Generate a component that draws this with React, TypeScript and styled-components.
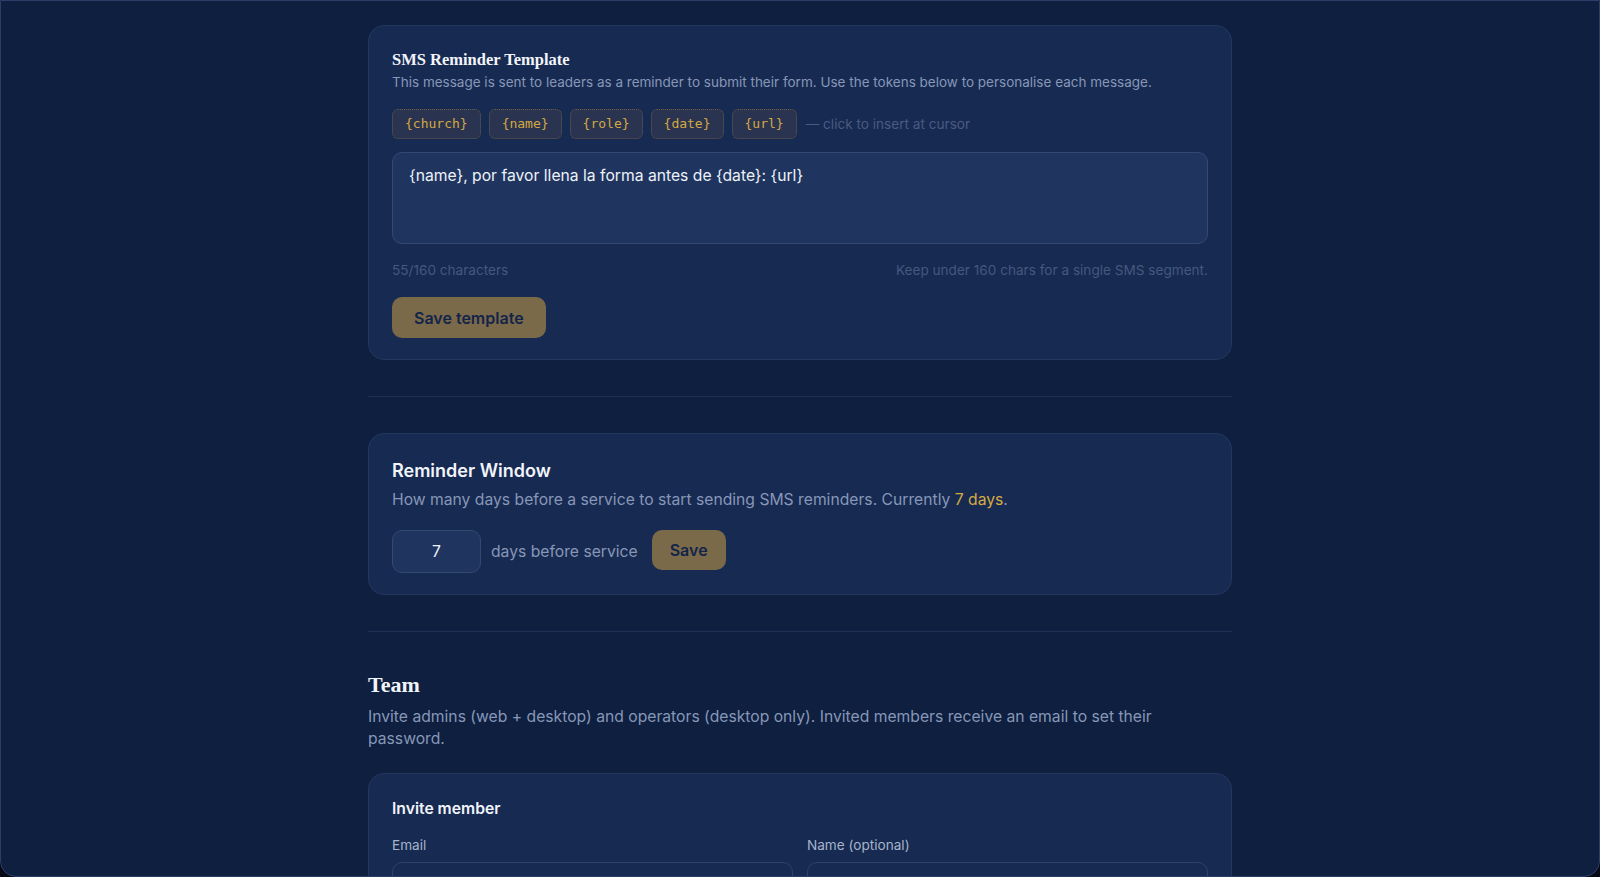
import React from "react";
import styled, { createGlobalStyle } from "styled-components";

const GlobalStyle = createGlobalStyle`
  * { box-sizing: border-box; }
  html, body { margin: 0; padding: 0; background: #070a12; }
  body { font-family: Inter, "Noto Sans", "Liberation Sans", sans-serif; -webkit-font-smoothing: antialiased; }
`;

const Window = styled.div`
  width: 100vw;
  height: 100vh;
  background: #0e1f3f;
  border: 1px solid #2c3e68;
  border-radius: 0 0 16px 16px;
  overflow: hidden;
`;

const Content = styled.main`
  width: 864px;
  margin: 0 auto;
  padding-top: 24px;
  display: flex;
  flex-direction: column;
`;

const Card = styled.section`
  background: #172a51;
  border: 1px solid #24385f;
  border-radius: 16px;
  padding: 23px 23px 21px;
  display: flex;
  flex-direction: column;
`;

const SerifTitle = styled.h3`
  margin: 0;
  font-family: "Liberation Serif", "DejaVu Serif", serif;
  font-weight: 700;
  font-size: 16.5px;
  line-height: 22px;
  color: #f1f4fa;
`;

const SansTitle = styled.h3<{ $size?: number; $lh?: number }>`
  margin: 0;
  font-weight: 600;
  font-size: ${(p) => p.$size ?? 18}px;
  line-height: ${(p) => p.$lh ?? 28}px;
  color: #f1f4fa;
`;

const Sub = styled.p<{ $size?: number; $mt?: number }>`
  margin: ${(p) => p.$mt ?? 2}px 0 0;
  font-size: ${(p) => p.$size ?? 13.5}px;
  line-height: ${(p) => ((p.$size ?? 13.5) >= 15 ? 22 : 18)}px;
  color: #8797b8;
`;

const Highlight = styled.span`
  color: #d6ab45;
`;

const TokenRow = styled.div`
  display: flex;
  align-items: center;
  gap: 8px;
  margin-top: 18px;
`;

const Token = styled.button`
  font-family: "DejaVu Sans Mono", "Liberation Mono", monospace;
  font-size: 13px;
  line-height: 17px;
  color: #d4a843;
  background: #2a3450;
  border: 1px dotted rgba(212, 168, 67, 0.35);
  border-radius: 6px;
  padding: 5px 12px 6px;
  cursor: pointer;
`;

const Hint = styled.span`
  font-size: 13.6px;
  color: #4a5b82;
  margin-left: 1px;
`;

const TextArea = styled.textarea`
  margin-top: 13px;
  width: 100%;
  height: 92px;
  resize: none;
  background: #1f355f;
  border: 1px solid #34496f;
  border-radius: 10px;
  padding: 12px 16px;
  font-family: Inter, "Noto Sans", sans-serif;
  font-size: 15.7px;
  line-height: 22px;
  color: #eef2f8;
  outline: none;
`;

const MetaRow = styled.div`
  display: flex;
  justify-content: space-between;
  margin-top: 17px;
  font-size: 13.6px;
  line-height: 18px;
  color: #45587e;
`;

const GoldButton = styled.button<{ $px?: number; $h?: number }>`
  align-self: flex-start;
  height: ${(p) => p.$h ?? 41}px;
  padding: 0 ${(p) => p.$px ?? 22}px;
  border: none;
  border-radius: 10px;
  background: #7b6a49;
  color: #13244a;
  font-family: Inter, "Noto Sans", sans-serif;
  font-size: 16px;
  font-weight: 600;
  cursor: pointer;
`;

const ButtonWrap = styled.div`
  margin-top: 18px;
  display: flex;
`;

const Divider = styled.hr<{ $after?: number }>`
  border: none;
  height: 1px;
  background: #1d3056;
  margin: 36px 0 ${(p) => p.$after ?? 36}px;
  width: 100%;
`;

const InlineRow = styled.div`
  display: flex;
  align-items: center;
  gap: 10px;
  margin-top: 19px;
`;

const NumberInput = styled.input`
  width: 89px;
  height: 43px;
  background: #1f355f;
  border: 1px solid #34496f;
  border-radius: 10px;
  text-align: center;
  font-family: Inter, "Noto Sans", sans-serif;
  font-size: 15.7px;
  color: #eef2f8;
  outline: none;
`;

const InlineText = styled.span`
  font-size: 15.7px;
  color: #8797b8;
  margin-right: 4px;
`;

const SectionHeading = styled.h2`
  margin: 0;
  font-family: "Liberation Serif", "DejaVu Serif", serif;
  font-weight: 700;
  font-size: 22px;
  line-height: 30px;
  color: #f1f4fa;
`;

const SectionDesc = styled.p`
  margin: 6px 0 23px;
  max-width: 800px;
  font-size: 15.7px;
  line-height: 22px;
  color: #8797b8;
`;

const FieldGrid = styled.div`
  display: grid;
  grid-template-columns: 1fr 1fr;
  gap: 14px;
  margin-top: 15px;
`;

const Field = styled.label`
  display: flex;
  flex-direction: column;
  gap: 8px;
  font-size: 13.6px;
  line-height: 18px;
  color: #a6b3cc;
`;

const TextInput = styled.input`
  height: 42px;
  background: #172a51;
  border: 1px solid #2f4369;
  border-radius: 10px;
  padding: 0 14px;
  font-family: Inter, "Noto Sans", sans-serif;
  font-size: 15.7px;
  color: #eef2f8;
  outline: none;
`;

const tokens = ["{church}", "{name}", "{role}", "{date}", "{url}"];

export default function App() {
  const text = "{name}, por favor llena la forma antes de {date}: {url}";
  return (
    <>
      <GlobalStyle />
      <Window>
        <Content>
          <Card>
            <SerifTitle>SMS Reminder Template</SerifTitle>
            <Sub>
              This message is sent to leaders as a reminder to submit their form. Use the tokens below to personalise each message.
            </Sub>
            <TokenRow>
              {tokens.map((t) => (
                <Token key={t}>{t}</Token>
              ))}
              <Hint>— click to insert at cursor</Hint>
            </TokenRow>
            <TextArea defaultValue={text} />
            <MetaRow>
              <span>55/160 characters</span>
              <span>Keep under 160 chars for a single SMS segment.</span>
            </MetaRow>
            <ButtonWrap>
              <GoldButton>Save template</GoldButton>
            </ButtonWrap>
          </Card>

          <Divider />

          <Card>
            <SansTitle>Reminder Window</SansTitle>
            <Sub $size={15.7} $mt={4}>
              How many days before a service to start sending SMS reminders. Currently <Highlight>7 days</Highlight>.
            </Sub>
            <InlineRow>
              <NumberInput defaultValue="7" />
              <InlineText>days before service</InlineText>
              <GoldButton $px={18} $h={40}>Save</GoldButton>
            </InlineRow>
          </Card>

          <Divider $after={38} />

          <SectionHeading>Team</SectionHeading>
          <SectionDesc>
            Invite admins (web + desktop) and operators (desktop only). Invited members receive an email to set their password.
          </SectionDesc>

          <Card>
            <SansTitle $size={15.7} $lh={24}>Invite member</SansTitle>
            <FieldGrid>
              <Field>
                Email
                <TextInput type="email" />
              </Field>
              <Field>
                Name (optional)
                <TextInput type="text" />
              </Field>
            </FieldGrid>
          </Card>
        </Content>
      </Window>
    </>
  );
}
